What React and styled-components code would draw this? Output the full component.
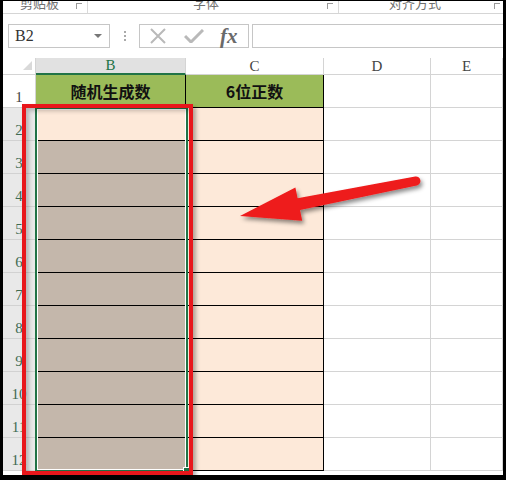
import styled, { createGlobalStyle } from "styled-components";

const Global = createGlobalStyle`
  html, body {
    margin: 0;
    padding: 0;
    background: #fff;
  }
`;

const COLS = ["B", "C", "D", "E"];
const ROWS = [1, 2, 3, 4, 5, 6, 7, 8, 9, 10, 11, 12];

function App() {
  return (
    <Frame>
      <Global />
      <Ribbon>
        <Group $w={85} $pad={17}>
          <GroupLabel>剪贴板</GroupLabel>
          <Launcher />
        </Group>
        <Group $w={251} $pad={105}>
          <GroupLabel>字体</GroupLabel>
          <Launcher />
        </Group>
        <Group $w={164} $pad={50} $last>
          <GroupLabel>对齐方式</GroupLabel>
          <Launcher />
        </Group>
      </Ribbon>

      <FormulaBar>
        <NameBox>
          <span>B2</span>
          <Caret />
        </NameBox>
        <Dots>
          <i />
          <i />
          <i />
        </Dots>
        <FxBox>
          <svg width="18" height="16" viewBox="0 0 18 16">
            <path d="M2 1 L16 15 M16 1 L2 15" stroke="#b9b9b9" strokeWidth="2" fill="none" />
          </svg>
          <svg width="20" height="14" viewBox="0 0 20 14">
            <path d="M1 7 L7 13 L19 1" stroke="#b9b9b9" strokeWidth="3" fill="none" />
          </svg>
          <Fx>fx</Fx>
        </FxBox>
        <FormulaInput />
      </FormulaBar>

      <Sheet>
        <Corner>
          <svg width="9" height="9" viewBox="0 0 9 9">
            <path d="M9 0 L9 9 L0 9 Z" fill="#d9d9d9" />
          </svg>
        </Corner>
        {COLS.map((c) => (
          <ColHead key={c} $active={c === "B"}>
            {c}
          </ColHead>
        ))}

        {ROWS.map((r) => (
          <Row key={r} r={r} />
        ))}

        <Selection>
          <FillHandle />
        </Selection>
        <RedFrame />
        <Arrow viewBox="0 0 500 420" width="500" height="420">
          <defs>
            <filter id="sh" x="-20%" y="-50%" width="140%" height="200%">
              <feDropShadow dx="2" dy="3" stdDeviation="2" floodColor="#000" floodOpacity="0.45" />
            </filter>
          </defs>
          <g transform="translate(-3 -58)" filter="url(#sh)">
            <path
              d="M415.2 176.6 L297.6 198.2 L295.4 187.4 L240 216 L302.2 220.8 L300 210 L416.8 185.4 A4.4 4.4 0 0 0 415.2 176.6 Z"
              fill="#ee1b1b"
            />
          </g>
        </Arrow>
      </Sheet>
    </Frame>
  );
}

function Row({ r }) {
  const head = r === 1;
  const selected = r >= 2;
  return (
    <>
      <RowHead $selected={selected}>{r}</RowHead>
      {head ? (
        <>
          <Cell $bg="#9bbb59" $line="#000" $bold>随机生成数</Cell>
          <Cell $bg="#9bbb59" $line="#000" $bold>6位正数</Cell>
        </>
      ) : (
        <>
          <Cell $bg={r === 2 ? "#fde9d9" : "#c4b7ab"} $line="#000" />
          <Cell $bg="#fde9d9" $line="#000" />
        </>
      )}
      <Cell $bg="#fff" $line="#d4d4d4" />
      <Cell $bg="#fff" $line="#d4d4d4" />
    </>
  );
}

export default App;

const Frame = styled.div`
  position: relative;
  width: 506px;
  height: 480px;
  box-sizing: border-box;
  border-style: solid;
  border-color: #000;
  border-width: 1px 3px 5px 3px;
  background: #fff;
  display: flex;
  flex-direction: column;
`;

const Ribbon = styled.div`
  display: flex;
  height: 12px;
  border-bottom: 1px solid #d5d5d5;
  overflow: hidden;
  background: #fff;
`;

const Group = styled.div`
  display: flex;
  align-items: flex-start;
  justify-content: space-between;
  width: ${(p) => p.$w}px;
  box-sizing: border-box;
  padding-left: ${(p) => p.$pad}px;
  padding-right: ${(p) => (p.$last ? 3 : 5)}px;
  border-right: ${(p) => (p.$last ? "none" : "1px solid #dadada")};
`;

const GroupLabel = styled.span`
  margin-top: -6px;
  font-family: "Noto Sans CJK SC", sans-serif;
  font-size: 13px;
  line-height: 16px;
  color: #6f6f6f;
`;

const Launcher = styled.span`
  margin-top: 2px;
  width: 5px;
  height: 5px;
  border-left: 1px solid #9a9a9a;
  border-top: 1px solid #9a9a9a;
`;

const FormulaBar = styled.div`
  display: flex;
  align-items: center;
  height: 44px;
  padding-left: 5px;
`;

const NameBox = styled.div`
  display: flex;
  align-items: center;
  justify-content: space-between;
  box-sizing: border-box;
  width: 102px;
  height: 24px;
  padding: 0 7px 0 6px;
  border: 1px solid #c6c6c6;
  font-family: "Liberation Serif", "DejaVu Serif", serif;
  font-size: 16px;
  color: #333;
`;

const Caret = styled.span`
  width: 0;
  height: 0;
  border-left: 4px solid transparent;
  border-right: 4px solid transparent;
  border-top: 4px solid #777;
`;

const Dots = styled.div`
  display: flex;
  flex-direction: column;
  gap: 2px;
  margin: 0 13px 0 14px;

  i {
    width: 2px;
    height: 2px;
    background: #aaa;
  }
`;

const FxBox = styled.div`
  display: flex;
  align-items: center;
  box-sizing: border-box;
  width: 110px;
  height: 24px;
  padding-left: 9px;
  border: 1px solid #c6c6c6;

  svg:first-child {
    margin-right: 17px;
  }
  svg:nth-child(2) {
    margin-right: 16px;
  }
`;

const Fx = styled.span`
  font-family: "Liberation Serif", "DejaVu Serif", serif;
  font-style: italic;
  font-weight: bold;
  font-size: 21px;
  line-height: 20px;
  color: #6a6a6a;
`;

const FormulaInput = styled.div`
  flex: 1;
  height: 24px;
  margin-left: 3px;
  box-sizing: border-box;
  border: 1px solid #c6c6c6;
  border-right: none;
`;

const Sheet = styled.div`
  position: relative;
  display: grid;
  grid-template-columns: 33px 150px 138px 107px 72px;
  grid-template-rows: 17px repeat(12, 33px);
`;

const Corner = styled.div`
  display: flex;
  align-items: flex-end;
  justify-content: flex-end;
  padding: 0 3px 4px 0;
  border-right: 1px solid #d4d4d4;
  border-bottom: 1px solid #d4d4d4;
`;

const ColHead = styled.div`
  display: flex;
  align-items: center;
  justify-content: center;
  box-sizing: border-box;
  background: ${(p) => (p.$active ? "#e1e1e1" : "#fff")};
  border-right: 1px solid #d4d4d4;
  border-bottom: ${(p) => (p.$active ? "2px solid #217346" : "1px solid #d4d4d4")};
  font-family: "Liberation Serif", "DejaVu Serif", serif;
  font-size: 15px;
  color: ${(p) => (p.$active ? "#217346" : "#444")};
`;

const RowHead = styled.div`
  display: flex;
  align-items: flex-end;
  justify-content: center;
  box-sizing: border-box;
  padding-bottom: 2px;
  background: ${(p) => (p.$selected ? "#e9e9e9" : "#fff")};
  border-bottom: 1px solid #d2d2d2;
  border-right: 1px solid #d4d4d4;
  font-family: "Liberation Serif", "DejaVu Serif", serif;
  font-size: 15px;
  line-height: 16px;
  color: ${(p) => (p.$selected ? "#3f6b52" : "#444")};
`;

const Cell = styled.div`
  display: flex;
  align-items: center;
  justify-content: center;
  box-sizing: border-box;
  background: ${(p) => p.$bg};
  border-right: 1px solid ${(p) => p.$line};
  border-bottom: 1px solid ${(p) => p.$line};
  font-family: "Noto Sans CJK SC", sans-serif;
  font-size: 16px;
  font-weight: ${(p) => (p.$bold ? 700 : 400)};
  color: #111;
`;

const Selection = styled.div`
  position: absolute;
  left: 32px;
  top: 49px;
  width: 153px;
  height: 365px;
  box-sizing: border-box;
  border: 2px solid #217346;
  box-shadow: inset 0 0 0 1px #fff;
  pointer-events: none;
`;

const FillHandle = styled.div`
  position: absolute;
  right: -4px;
  bottom: -4px;
  width: 5px;
  height: 5px;
  background: #217346;
  border: 1px solid #fff;
`;

const RedFrame = styled.div`
  position: absolute;
  left: 19px;
  top: 46px;
  width: 171px;
  height: 371px;
  box-sizing: border-box;
  border: 4px solid #e8161b;
  box-shadow: 3px 3px 4px rgba(0, 0, 0, 0.3), inset 3px 3px 4px rgba(0, 0, 0, 0.22);
  pointer-events: none;
`;

const Arrow = styled.svg`
  position: absolute;
  left: 0;
  top: 0;
  overflow: visible;
  pointer-events: none;
`;
